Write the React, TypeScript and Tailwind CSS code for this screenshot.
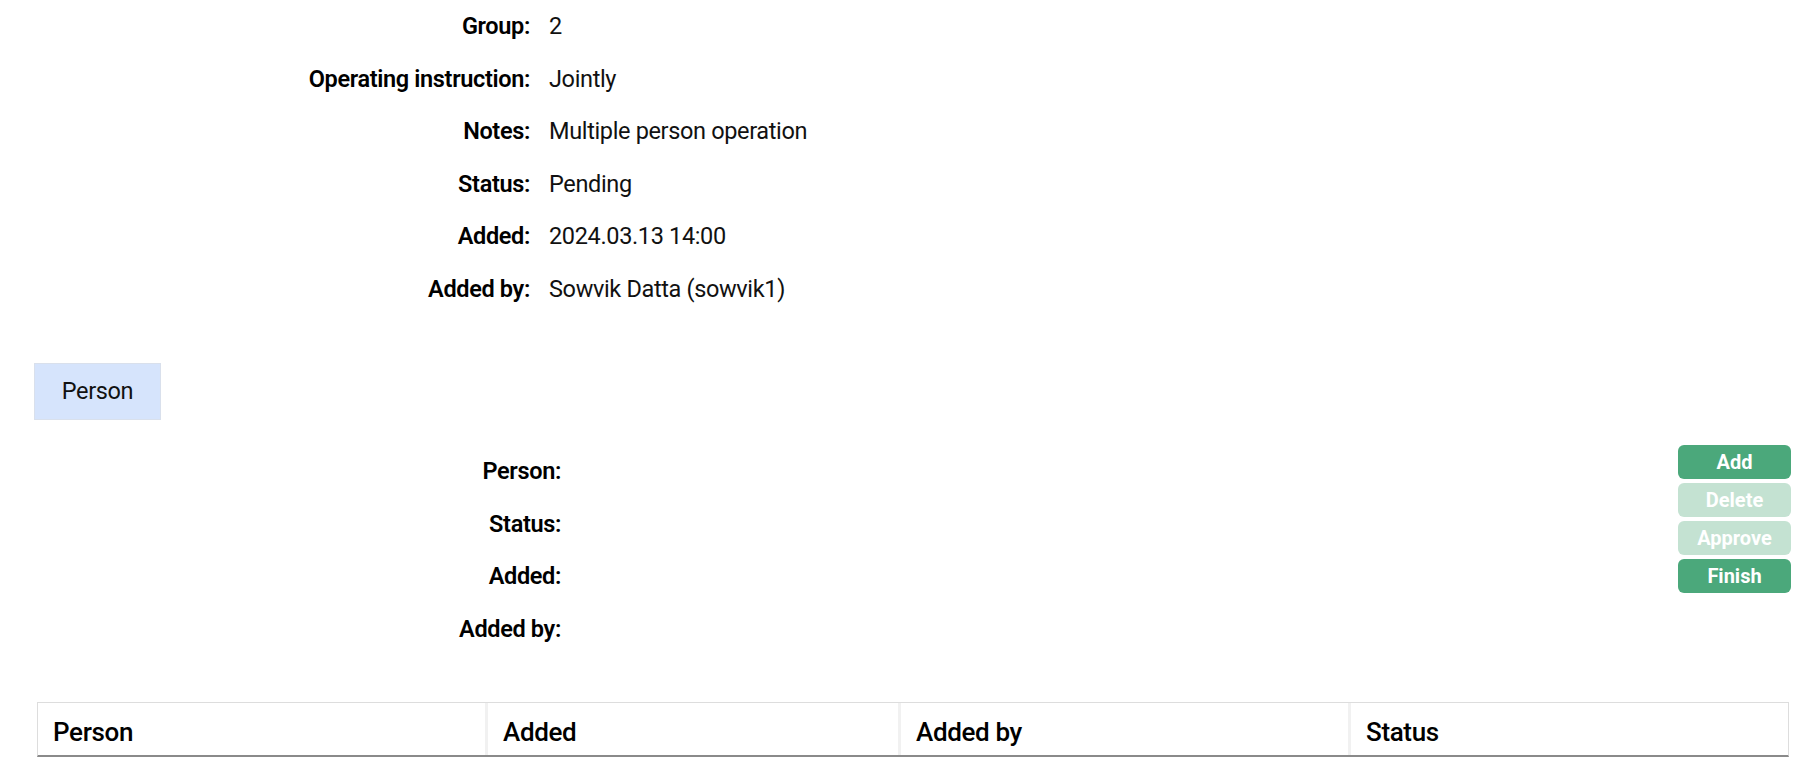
import React from 'react';

const details = [
  { label: 'Group:', value: '2' },
  { label: 'Operating instruction:', value: 'Jointly' },
  { label: 'Notes:', value: 'Multiple person operation' },
  { label: 'Status:', value: 'Pending' },
  { label: 'Added:', value: '2024.03.13 14:00' },
  { label: 'Added by:', value: 'Sowvik Datta (sowvik1)' },
];

const personFields = ['Person:', 'Status:', 'Added:', 'Added by:'];

const actions = [
  { name: 'Add', enabled: true },
  { name: 'Delete', enabled: false },
  { name: 'Approve', enabled: false },
  { name: 'Finish', enabled: true },
];

export default function App() {
  return (
    <div className="min-h-screen w-full bg-white text-[#111] font-['Roboto','Noto_Sans',sans-serif] text-[23.5px] tracking-[-0.35px]">
      {/* operation details */}
      <div className="grid grid-cols-[530px_1fr] gap-x-[19px] leading-[52.5px]">
        {details.map((d) => (
          <React.Fragment key={d.label}>
            <div className="text-right font-semibold text-black">{d.label}</div>
            <div>{d.value}</div>
          </React.Fragment>
        ))}
      </div>

      {/* tabs */}
      <div className="mt-[48px] ml-[34px] flex">
        <div className="flex h-[57px] w-[127px] items-center justify-center border border-[#d9e0ec] bg-[#d6e4fc]">
          Person
        </div>
      </div>

      {/* person form + actions */}
      <div className="mt-[25px] flex items-start justify-between pr-[22px]">
        <div className="grid grid-cols-[561px_1fr] gap-x-[19px] leading-[52.5px]">
          {personFields.map((f) => (
            <React.Fragment key={f}>
              <div className="text-right font-semibold text-black">{f}</div>
              <div></div>
            </React.Fragment>
          ))}
        </div>
        <div className="flex w-[113px] flex-col gap-[4px]">
          {actions.map((a) => (
            <button
              key={a.name}
              disabled={!a.enabled}
              className={
                a.enabled
                  ? 'h-[34px] w-full rounded-[6px] bg-[#4ba87b] text-[20px] font-bold leading-none tracking-normal text-white'
                  : 'h-[34px] w-full rounded-[6px] bg-[#c4e2d2] text-[20px] font-bold leading-none tracking-normal text-white'
              }
            >
              {a.name}
            </button>
          ))}
        </div>
      </div>

      {/* person list */}
      <div className="mt-[47px] ml-[37px] mr-[24px] border-x border-t border-[#dddddd] border-b-2 border-b-[#8a8a8a]">
        <table className="w-full table-fixed border-separate border-spacing-0">
          <thead>
            <tr className="text-left text-[26px] leading-[30px] text-black">
              <th className="w-[447px] pt-[14px] pb-[8px] pl-[15px] font-medium">Person</th>
              <th className="w-[413px] border-l-[3px] border-l-[#f1f1f1] pt-[14px] pb-[8px] pl-[15px] font-medium">Added</th>
              <th className="w-[450px] border-l-[3px] border-l-[#f1f1f1] pt-[14px] pb-[8px] pl-[15px] font-medium">Added by</th>
              <th className="border-l-[3px] border-l-[#f1f1f1] pt-[14px] pb-[8px] pl-[15px] font-medium">Status</th>
            </tr>
          </thead>
          <tbody></tbody>
        </table>
      </div>
    </div>
  );
}
